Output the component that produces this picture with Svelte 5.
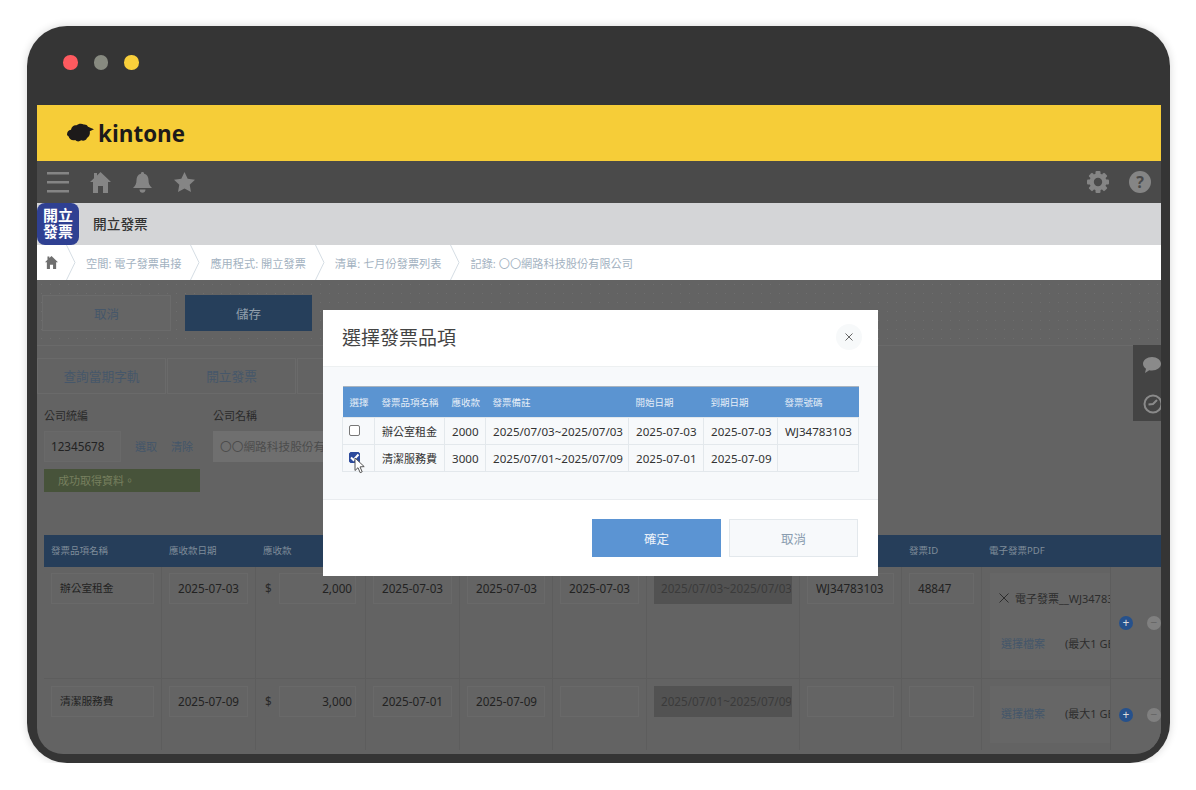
<script>
  const crumbs = ["空間: 電子發票串接", "應用程式: 開立發票", "清單: 七月份發票列表", "記錄: 〇〇網路科技股份有限公司"];
  const tabs = ["查詢當期字軌", "開立發票", ""];
  const headers = ["發票品項名稱", "應收款日期", "應收款", "", "", "", "", "", "發票ID", "電子發票PDF", ""];
  const rows = [
    { name: "辦公室租金", due: "2025-07-03", amount: "2,000", d1: "2025-07-03", d2: "2025-07-03", d3: "2025-07-03", note: "2025/07/03~2025/07/03", no: "WJ34783103", id: "48847", file: "電子發票__WJ34783103.pdf" },
    { name: "清潔服務費", due: "2025-07-09", amount: "3,000", d1: "2025-07-01", d2: "2025-07-09", d3: "", note: "2025/07/01~2025/07/09", no: "", id: "", file: "" },
  ];
  const items = [
    { name: "辦公室租金", amount: "2000", note: "2025/07/03~2025/07/03", start: "2025-07-03", end: "2025-07-03", no: "WJ34783103", checked: false },
    { name: "清潔服務費", amount: "3000", note: "2025/07/01~2025/07/09", start: "2025-07-01", end: "2025-07-09", no: "", checked: true },
  ];
</script>

<div class="frame">
  <div class="lights">
    <span class="light red"></span>
    <span class="light grey"></span>
    <span class="light yellow"></span>
  </div>

  <div class="screen">
    <header class="brand">
      <svg width="27" height="21" viewBox="0 0 27 21">
        <path fill="#1d1a1a" d="M0 11.500c0-2.500 1.500-4.500 4-4.800C4.600 3.500 7 1.800 9.500 2.300 11.200.6 14.500 0 16.800 1.500c1.800-.3 3.400.6 4.200 2.300L27 6.200l-4.200 2.100c.5 2.800-.5 5.500-2.800 6.700-.8 2.400-3.600 3.200-5.800 2.300-1.800 1.600-4.700 1.500-6-.3C4.800 18 1.800 15.500 1.700 13.500 .7 13 0 12.300 0 11.500z"/>
      </svg>
      <span class="word">kintone</span>
    </header>

    <nav class="nav">
      <div class="nav-group">
        <svg class="burger" width="22" height="21" viewBox="0 0 22 21" fill="#858585"><rect y="0" width="22" height="2.500"/><rect y="9" width="22" height="2.500"/><rect y="18" width="22" height="2.500"/></svg>
        <svg width="21" height="21" viewBox="0 0 21 21" fill="#858585"><path d="M10.500 0 21 10h-3v11h-5v-7H8v7H3V10H0L4 6.200V1h3v2.400z"/></svg>
        <svg width="19" height="21" viewBox="0 0 19 21" fill="#858585"><path d="M9.500 0c1 0 1.600.7 1.600 1.700 3 .7 4.400 3.300 4.400 6.300 0 3.500 1 5.500 3.500 8H0c2.500-2.500 3.500-4.500 3.500-8 0-3 1.400-5.600 4.400-6.300C7.900.7 8.500 0 9.500 0zM6.500 17.500h6c0 2-1.300 3.300-3 3.300s-3-1.300-3-3.300z"/></svg>
        <svg width="21" height="20" viewBox="0 0 21 20" fill="#858585"><path d="m10.500 0 3.200 6.700 7.300 1-5.300 5.100 1.300 7.200-6.500-3.500L4 20l1.300-7.200L0 7.700l7.300-1z"/></svg>
      </div>
      <div class="nav-group right">
        <svg width="22" height="22" viewBox="0 0 22 22"><g fill="#858585"><circle cx="11" cy="11" r="8.500"/><rect x="8.500" width="5" height="22" rx="1"/><rect x="8.500" width="5" height="22" rx="1" transform="rotate(45 11 11)"/><rect x="8.500" width="5" height="22" rx="1" transform="rotate(90 11 11)"/><rect x="8.500" width="5" height="22" rx="1" transform="rotate(135 11 11)"/></g><circle cx="11" cy="11" r="4.200" fill="#4a4a4a"/></svg>
        <span class="help">?</span>
      </div>
    </nav>

    <div class="app-title">
      <div class="app-icon"><span>開立</span><span>發票</span></div>
      <span class="app-name">開立發票</span>
    </div>

    <div class="crumbs">
      <svg class="crumb-home" width="13" height="13" viewBox="0 0 21 21" fill="#6f6f6f"><path d="M10.500 0 21 10h-3v11h-5v-7H8v7H3V10H0L4 6.200V1h3v2.400z"/></svg>
      {#each crumbs as crumb}
        <svg class="chev" width="10" height="35" viewBox="0 0 10 35"><path d="M.5 0 9 17.500.5 35" fill="none" stroke="#d5dde4"/></svg>
        <span class="crumb">{crumb}</span>
      {/each}
    </div>

    <main class="content">
      <div class="toolbar">
        <button class="btn ghost">取消</button>
        <button class="btn save">儲存</button>
      </div>

      <div class="tabs">
        {#each tabs as tab}
          <div class="tab">{tab}</div>
        {/each}
      </div>

      <div class="fields">
        <div class="field">
          <span class="label">公司統編</span>
          <div class="field-row">
            <div class="box tax">12345678</div>
            <span class="link">選取</span>
            <span class="link">清除</span>
          </div>
          <div class="ok">成功取得資料。</div>
        </div>
        <div class="field">
          <span class="label">公司名稱</span>
          <div class="box company">〇〇網路科技股份有限公司</div>
        </div>
      </div>

      <div class="grid head">
        {#each headers as h}
          <div class="th">{h}</div>
        {/each}
      </div>

      {#each rows as r, i}
        <div class="grid row" class:second={i === 1}>
          <div class="td"><div class="box name">{r.name}</div></div>
          <div class="td"><div class="box">{r.due}</div></div>
          <div class="td money"><span>$</span><div class="box num">{r.amount}</div></div>
          <div class="td"><div class="box">{r.d1}</div></div>
          <div class="td"><div class="box">{r.d2}</div></div>
          <div class="td"><div class="box">{r.d3}</div></div>
          <div class="td"><div class="box locked">{r.note}</div></div>
          <div class="td"><div class="box">{r.no}</div></div>
          <div class="td"><div class="box">{r.id}</div></div>
          <div class="td pdf">
            <div class="panel" class:short={!r.file}>
              {#if r.file}
                <div class="file">
                  <svg class="remove" width="10" height="10" viewBox="0 0 10 10"><path d="m.5.500 9 9m0-9-9 9" stroke="#2d2d2d" fill="none"/></svg>
                  <span>{r.file}</span>
                </div>
              {/if}
              <div class="pick"><span class="link">選擇檔案</span><span class="limit">(最大1 GB)</span></div>
            </div>
          </div>
          <div class="actions">
            <span class="round add">+</span>
            <span class="round del">−</span>
          </div>
        </div>
      {/each}
    </main>

    <aside class="side">
      <svg width="20" height="17" viewBox="0 0 20 17" fill="#8a8a8a"><path d="M9 0c5 0 9 3 9 6.800s-4 6.700-9 6.700c-1 0-2-.1-2.800-.3L2 16l1-4.300C1.200 10.500 0 8.800 0 6.800 0 3 4 0 9 0z"/></svg>
      <svg width="20" height="20" viewBox="0 0 20 20" fill="none" stroke="#8a8a8a" stroke-width="2"><circle cx="10" cy="10" r="8.500"/><path d="M5.500 10.500 10 10l4-4"/></svg>
    </aside>

    <div class="modal">
      <div class="modal-head">
        <h2>選擇發票品項</h2>
        <span class="close">
          <svg width="8" height="8" viewBox="0 0 8 8"><path d="m.5.500 7 7m0-7-7 7" stroke="#666" fill="none"/></svg>
        </span>
      </div>
      <div class="modal-body">
        <table>
          <colgroup>
            <col style="width:32px" /><col style="width:70px" /><col style="width:41px" /><col style="width:143px" /><col style="width:75px" /><col style="width:74px" /><col style="width:81px" />
          </colgroup>
          <thead>
            <tr>
              <th>選擇</th><th>發票品項名稱</th><th>應收款</th><th>發票備註</th><th>開始日期</th><th>到期日期</th><th>發票號碼</th>
            </tr>
          </thead>
          <tbody>
            {#each items as item}
              <tr>
                <td class="check-cell">
                  <span class="check" class:on={item.checked}>
                    {#if item.checked}
                      <svg width="11" height="11" viewBox="0 0 11 11"><path d="M2 5.500 4.500 8 9.500 2.500" fill="none" stroke="#fff" stroke-width="2"/></svg>
                    {/if}
                  </span>
                  {#if item.checked}
                    <svg class="cursor" width="12" height="17" viewBox="0 0 12 17"><path d="M1 1v12.500l3-2.800 2.200 5 2-.9-2.200-4.900 4.200-.3z" fill="#fff" stroke="#555"/></svg>
                  {/if}
                </td>
                <td class="cjk">{item.name}</td>
                <td>{item.amount}</td>
                <td>{item.note}</td>
                <td>{item.start}</td>
                <td>{item.end}</td>
                <td>{item.no}</td>
              </tr>
            {/each}
          </tbody>
        </table>
      </div>
      <div class="modal-foot">
        <button class="mbtn primary">確定</button>
        <button class="mbtn">取消</button>
      </div>
    </div>
  </div>
</div>

<style>
  :global(body) {
    margin: 0;
    background: #fff;
    font-family: "Noto Sans", "Noto Sans CJK TC", sans-serif;
    font-size: 11.7px;
  }

  .frame {
    box-sizing: border-box;
    width: 1143px;
    height: 737px;
    margin: 26px 0 0 27px;
    padding: 0 9px 9px 10px;
    background: #353535;
    border-radius: 40px;
    box-shadow: 0 0 9px rgba(0, 0, 0, 0.16);
    display: flex;
    flex-direction: column;
  }

  .lights {
    flex: none;
    height: 79px;
    box-sizing: border-box;
    padding: 29px 0 0 26px;
    display: flex;
    gap: 16px;
  }
  .light {
    width: 14.500px;
    height: 14.500px;
    border-radius: 50%;
  }
  .red { background: #fe5a5f; }
  .grey { background: #878a80; }
  .yellow { background: #f8cf3b; }

  .screen {
    position: relative;
    flex: 1;
    min-height: 0;
    overflow: hidden;
    border-radius: 0 0 26px 26px;
    background: #636363;
    display: flex;
    flex-direction: column;
  }

  .brand {
    flex: none;
    height: 56px;
    box-sizing: border-box;
    padding-left: 30px;
    background: #f6cd38;
    display: flex;
    align-items: center;
    gap: 4px;
  }
  .word {
    font-family: "Open Sans", sans-serif;
    font-weight: 700;
    font-size: 22.4px;
    color: #1d1a1a;
  }

  .nav {
    flex: none;
    height: 42px;
    box-sizing: border-box;
    padding: 0 10px;
    background: #4a4a4a;
    display: flex;
    align-items: center;
    justify-content: space-between;
  }
  .nav-group {
    display: flex;
    align-items: center;
    gap: 22px;
  }
  .burger {
    margin-right: -1px;
  }
  .nav-group.right {
    gap: 20px;
  }
  .help {
    width: 22px;
    height: 22px;
    border-radius: 50%;
    background: #858585;
    color: #4a4a4a;
    font-weight: 700;
    font-size: 16px;
    line-height: 22px;
    text-align: center;
  }

  .app-title {
    flex: none;
    height: 42px;
    background: #d4d5d7;
    display: flex;
    align-items: center;
    gap: 14px;
    font-size: 13.700px;
    font-weight: 500;
    color: #333;
  }
  .app-name {
    margin-top: -2px;
  }
  .app-icon {
    width: 42px;
    height: 42px;
    box-sizing: border-box;
    padding-bottom: 3px;
    border-radius: 8px;
    background: #2f4092;
    color: #fff;
    font-size: 15px;
    font-weight: 700;
    line-height: 16px;
    display: flex;
    flex-direction: column;
    align-items: center;
    justify-content: center;
  }

  .crumbs {
    flex: none;
    height: 35px;
    background: #fff;
    display: flex;
    align-items: center;
    font-size: 11.200px;
    color: #a3b2c1;
  }
  .crumb-home {
    margin: 0 8px 0 8px;
  }
  .chev {
    flex: none;
    margin-right: 10px;
  }
  .crumb {
    margin-right: 9px;
    white-space: nowrap;
  }

  .content {
    flex: 1;
    min-height: 0;
    color: #2a2a2a;
  }

  .toolbar {
    height: 66px;
    box-sizing: border-box;
    padding: 15px 0 0 5px;
    display: flex;
    gap: 14px;
    align-items: flex-start;
    border-bottom: 1px solid #6a6a6a;
    background-image: radial-gradient(#6e6e6e 0.6px, transparent 1px);
    background-size: 9px 9px;
  }
  .btn {
    width: 129px;
    height: 36px;
    font: inherit;
    font-size: 12.500px;
    border-radius: 0;
  }
  .ghost {
    background: #656565;
    border: 1px solid #6b6b6b;
    color: #46576a;
  }
  .save {
    width: 127px;
    background: #263f5b;
    border: none;
    color: #93a0ad;
  }

  .tabs {
    padding-top: 12px;
    display: flex;
    gap: 1px;
  }
  .tab {
    width: 129px;
    height: 36px;
    box-sizing: border-box;
    border: 1px solid #6a6a6a;
    color: #46576a;
    font-size: 12.700px;
    line-height: 35px;
    text-align: center;
  }

  .fields {
    height: 141px;
    box-sizing: border-box;
    padding: 13px 0 0 7px;
    display: flex;
    gap: 13px;
  }
  .field {
    width: 156px;
  }
  .field .label {
    display: block;
    height: 24px;
    font-size: 11px;
    line-height: 18px;
  }
  .field-row {
    display: flex;
    align-items: center;
    gap: 14px;
  }
  .box {
    box-sizing: border-box;
    height: 31px;
    padding: 0 8px;
    border: 1px solid #696969;
    background: #646464;
    color: #222;
    line-height: 28px;
    white-space: nowrap;
    overflow: hidden;
  }
  .box.name {
    font-size: 10.700px;
  }
  .tax {
    width: 77px;
    padding: 0 6px;
    background: #666;
  }
  .link {
    color: #44566a;
    font-size: 11px;
  }
  .field-row .link {
    margin-top: -2px;
  }
  .ok {
    width: 156px;
    height: 23px;
    box-sizing: border-box;
    margin-top: 7px;
    padding-left: 14px;
    background: #47533a;
    color: #77805f;
    font-size: 11px;
    line-height: 23px;
  }
  .company {
    width: 200px;
    background: #6f6f6f;
    border-color: #6f6f6f;
    color: #4c4c4c;
    padding: 0 6px;
  }

  .grid {
    margin-left: 7px;
    display: grid;
    grid-template-columns: 118px 94px 110px 94px 93px 94px 153px 102px 80px 128px 51px;
  }
  .head {
    height: 32px;
    background: #263e5a;
    color: #7f8c99;
    font-size: 9.500px;
    line-height: 32px;
  }
  .th {
    padding-left: 7px;
  }
  .row {
    height: 111px;
    border-bottom: 1px solid #5d5d5d;
  }
  .row.second {
    height: 71px;
    border-bottom: none;
  }
  .td {
    box-sizing: border-box;
    padding: 6px 7px 0 7px;
    border-right: 1px solid #5d5d5d;
    min-width: 0;
  }
  .row.second .td {
    padding-top: 7px;
  }
  .money {
    display: flex;
    gap: 7px;
    padding-right: 9px;
    padding-left: 9px;
    line-height: 31px;
  }
  .money .box {
    flex: 1;
  }
  .num {
    text-align: right;
    padding-right: 3px;
  }
  .box.locked {
    background: #525252;
    border-color: #525252;
    color: #3b3b3b;
    padding: 0 6px;
  }
  .pdf {
    padding-right: 0;
    overflow: hidden;
    border-right: none;
  }
  .panel {
    height: 97px;
    width: 130px;
    box-sizing: border-box;
    padding: 15px 3px 0;
    margin-left: 1px;
    background: #666;
    white-space: nowrap;
    color: #2d2d2d;
  }
  .panel.short {
    height: 57px;
    padding-top: 19px;
  }
  .panel.short .pick {
    margin-top: 0;
  }
  .file {
    font-size: 11px;
    height: 20px;
    padding-left: 6px;
    display: flex;
    align-items: center;
    gap: 6px;
  }
  .remove {
    flex: none;
  }
  .pick {
    margin-top: 27px;
    padding-left: 8px;
  }
  .limit {
    margin-left: 20px;
    font-size: 11px;
  }
  .actions {
    display: flex;
    align-items: center;
    gap: 14px;
    padding-left: 8px;
    background: #646464;
    border-left: 1px solid #5d5d5d;
  }
  .round {
    flex: none;
    width: 14px;
    height: 14px;
    border-radius: 50%;
    color: #ddd;
    font-size: 12px;
    line-height: 13px;
    text-align: center;
  }
  .add {
    background: #26518c;
  }
  .del {
    background: #808080;
    color: #666;
  }

  .side {
    position: absolute;
    top: 240px;
    right: 0;
    width: 28px;
    height: 76px;
    box-sizing: border-box;
    padding: 12px 0 0 10px;
    background: #444;
    overflow: hidden;
    display: flex;
    flex-direction: column;
    gap: 20px;
  }

  .modal {
    position: absolute;
    left: 286px;
    top: 205px;
    width: 555px;
    height: 266px;
    background: #fff;
    display: flex;
    flex-direction: column;
    color: #333;
  }
  .modal-head {
    flex: none;
    height: 57px;
    box-sizing: border-box;
    padding: 0 16px 2px 19px;
    border-bottom: 1px solid #edf0f1;
    display: flex;
    align-items: center;
    justify-content: space-between;
  }
  h2 {
    margin: 0;
    font-size: 19px;
    font-weight: 400;
    color: #444;
  }
  .close {
    width: 26px;
    height: 26px;
    border-radius: 50%;
    background: #f7f9fa;
    display: flex;
    align-items: center;
    justify-content: center;
  }
  .modal-body {
    flex: none;
    height: 133px;
    box-sizing: border-box;
    padding: 19px 19px 0;
    background: #f7f9fb;
    border-bottom: 1px solid #e9ecef;
  }
  table {
    width: 516px;
    border-collapse: collapse;
    table-layout: fixed;
  }
  th {
    height: 30px;
    padding: 0 0 0 7px;
    background: #5b94d1;
    border-top: 1px solid #a9b4bf;
    color: #e6eef7;
    font-size: 9.500px;
    font-weight: 400;
    text-align: left;
  }
  td {
    height: 26px;
    padding: 0 0 0 7px;
    border: 1px solid #e3e8ec;
    font-size: 11.600px;
    color: #333;
    white-space: nowrap;
  }
  .cjk {
    font-size: 11px;
  }
  .check-cell {
    position: relative;
    padding: 0;
  }
  .check {
    display: block;
    box-sizing: border-box;
    width: 11px;
    height: 11px;
    margin: 0 0 1px 6px;
    border: 1px solid #777;
    border-radius: 2px;
    background: #fff;
  }
  .check.on {
    background: #2c4a9c;
    border-color: #2c4a9c;
  }
  .check svg {
    display: block;
    margin: -1px;
  }
  .cursor {
    position: absolute;
    left: 11px;
    top: 12px;
  }
  .modal-foot {
    flex: 1;
    box-sizing: border-box;
    padding: 19px 20px 0 0;
    display: flex;
    justify-content: flex-end;
    gap: 8px;
  }
  .mbtn {
    width: 129px;
    height: 38px;
    font: inherit;
    font-size: 12.500px;
    background: #f7f9fb;
    border: 1px solid #e3e8ec;
    color: #8a9db0;
    border-radius: 0;
  }
  .primary {
    background: #5b94d3;
    border-color: #5b94d3;
    color: #eaf1f9;
  }
</style>
